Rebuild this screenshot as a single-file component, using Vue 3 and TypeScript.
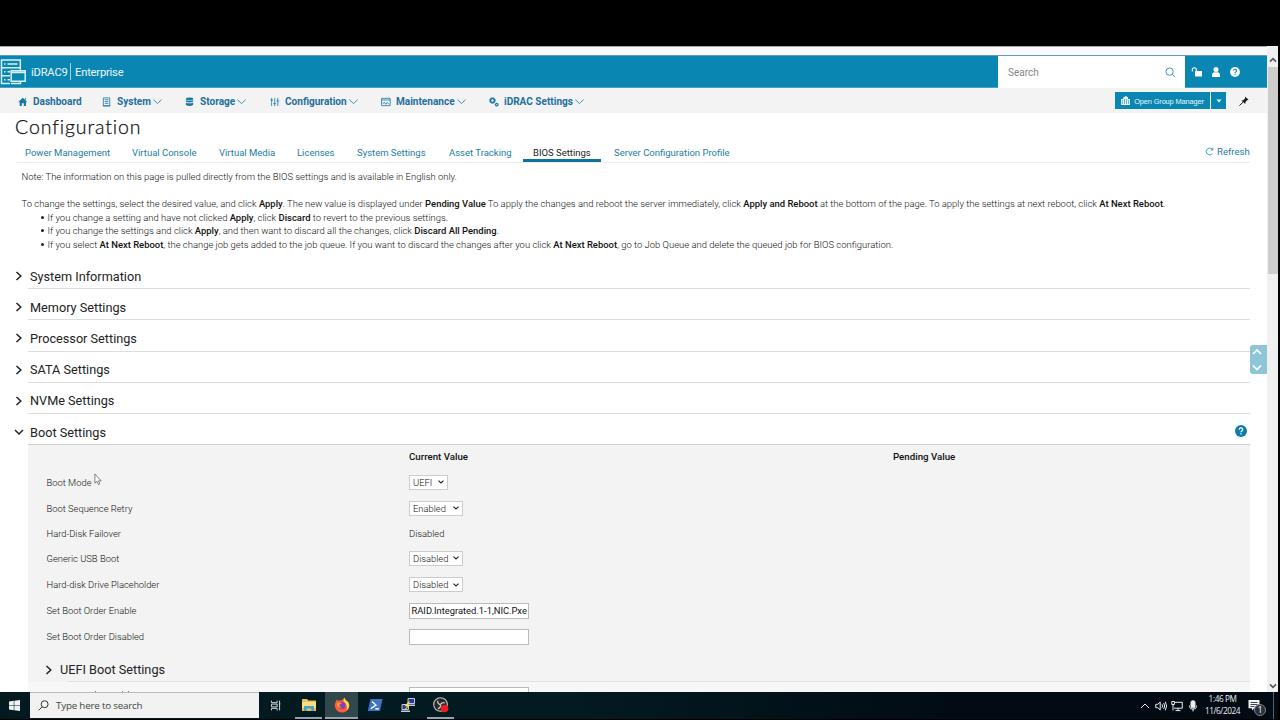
<script setup lang="ts">
import { ref } from "vue";

interface NavItem {
  label: string;
  icon: string;
  menu: boolean;
}

interface Setting {
  label: string;
  kind: "select" | "text" | "input";
  value: string;
  size?: string;
}

const navItems: NavItem[] = [
  { label: "Dashboard", icon: "home", menu: false },
  { label: "System", icon: "system", menu: true },
  { label: "Storage", icon: "storage", menu: true },
  { label: "Configuration", icon: "sliders", menu: true },
  { label: "Maintenance", icon: "monitor", menu: true },
  { label: "iDRAC Settings", icon: "gears", menu: true },
];

const tabs = [
  "Power Management",
  "Virtual Console",
  "Virtual Media",
  "Licenses",
  "System Settings",
  "Asset Tracking",
  "BIOS Settings",
  "Server Configuration Profile",
];
const activeTab = ref("BIOS Settings");

const sections = [
  "System Information",
  "Memory Settings",
  "Processor Settings",
  "SATA Settings",
  "NVMe Settings",
];

const settings: Setting[] = [
  { label: "Boot Mode", kind: "select", value: "UEFI", size: "small" },
  { label: "Boot Sequence Retry", kind: "select", value: "Enabled" },
  { label: "Hard-Disk Failover", kind: "text", value: "Disabled" },
  { label: "Generic USB Boot", kind: "select", value: "Disabled" },
  { label: "Hard-disk Drive Placeholder", kind: "select", value: "Disabled" },
  { label: "Set Boot Order Enable", kind: "input", value: "RAID.Integrated.1-1,NIC.Pxe" },
  { label: "Set Boot Order Disabled", kind: "input", value: "" },
];
</script>

<template>
  <div class="screen">
    <div class="black-bar"></div>
    <div class="browser">
      <main class="page">
        <div class="browser-edge"></div>
        <header class="header">
          <svg class="logo" viewBox="0 0 26 26" fill="none" stroke="#d9f2f7" stroke-width="1.5">
            <path d="M1.5 1h18.8v7.7H1.5zM10 16.8H1.5V8.7h18.8v2M10 24.5H1.5v-7.7" />
            <path d="M11.2 11.7h14v10.5h-14zM11.2 13.6h14M11 24.6h9.5v-2" />
            <path d="M7.5 5h10M7.5 12.8h2.5M7.5 20.7h2.5M4 5h1.5M4 12.8h1.5M4 20.7h1.5" />
          </svg>
          <span class="brand">iDRAC9</span>
          <span class="edition">Enterprise</span>
          <div class="search">
            <span>Search</span>
            <svg viewBox="0 0 12 12" fill="none" stroke="#2b8fb5"><circle cx="5" cy="5" r="4" /><path d="M8 8l3 3" /></svg>
          </div>
          <div class="user-icons">
            <svg viewBox="0 0 12 12" fill="#fff"><path d="M4 5h7v5.5H4z" /><path d="M1.3 5.5V3.7a2 2 0 0 1 4 0V5" fill="none" stroke="#fff" stroke-width="1.1" /></svg>
            <svg viewBox="0 0 12 12" fill="#fff"><circle cx="6" cy="3.5" r="2.5" /><path d="M2 11V8.8Q2 6.2 4.2 6.2h3.6Q10 6.2 10 8.8V11z" /></svg>
            <svg viewBox="0 0 12 12"><circle cx="6" cy="6" r="4.9" fill="#fff" /><path d="M4.6 4.8a1.45 1.45 0 1 1 2.1 1.2Q6 6.3 6 7M6 7.8v1" fill="none" stroke="#0a86b2" stroke-width="1.1" /></svg>
          </div>
        </header>

        <nav class="nav">
          <div class="nav-items">
            <a v-for="item in navItems" :key="item.label" class="nav-item">
              <svg class="nav-icon" viewBox="0 0 11 11" fill="none" stroke="#1c79a5">
                <path v-if="item.icon === 'home'" d="M0.8 5.3L5.2 1l4.5 4.3H8.8V10H6.4V7H4.2v3H1.8V5.3zM8 1v3" fill="#1c79a5" stroke="none" />
                <path v-if="item.icon === 'home'" d="M0.8 5.6L5.2 1.4 9.6 5.6M8.3 1.2v2" />
                <path v-if="item.icon === 'system'" d="M1.5 1h7v9h-7zM3 3h4M3 5h4M3 7h4M1 9.5h8" stroke-width=".9" />
                <g v-if="item.icon === 'storage'" fill="#1c79a5" stroke="none">
                  <ellipse cx="5" cy="2.1" rx="4" ry="1.5" />
                  <path d="M1 3.2q4 2 8 0v1.7q-4 2.4-8 0zM1 6q4 2 8 0v2.8q-4 2.4-8 0z" />
                </g>
                <path v-if="item.icon === 'sliders'" d="M1.8 1v9M5.2 1v9M8.6 1v9M.3 3.3h3M3.7 7.3h3M7.1 4.3h3" stroke-width=".9" />
                <path v-if="item.icon === 'monitor'" d="M.6 1.5h9.5v8H.6zM.6 3.3h9.5M2 7.5l1.5-1.8L5.3 8l1.5-2L8.7 8" stroke-width=".9" />
                <g v-if="item.icon === 'gears'">
                  <circle cx="3.8" cy="3.8" r="2.2" stroke-width="1.8" />
                  <circle cx="3.8" cy="3.8" r="3.2" stroke-width="1" stroke-dasharray="1.2 1.3" />
                  <circle cx="8.5" cy="8.3" r="1.4" stroke-width="1.4" />
                </g>
              </svg>
              <b>{{ item.label }}</b>
              <svg v-if="item.menu" class="caret" viewBox="0 0 9 6" fill="none" stroke="#4291b5"><path d="M.4.6l4.1 4L8.6.6" /></svg>
            </a>
          </div>
          <div class="group-manager">
            <button class="group-open">
              <svg viewBox="0 0 9 9" fill="#e8f6fa"><path d="M0 3h2.2V1.5L5 0l2 1.5V3H9v6H0z" /><path d="M1.3 4v4M3.5 3v5M5.5 3v5M7.6 4v4" stroke="#0a86b2" stroke-width=".6" /></svg>
              <span>Open Group Manager</span>
            </button>
            <button class="group-more"><svg viewBox="0 0 6 4"><path d="M.5.5h5L3 3.4z" fill="#fff" /></svg></button>
          </div>
          <svg class="pin" viewBox="0 0 10 10"><path d="M6 .4l3.6 3.4-1.2.2-1.9 2.1-.3 1.9-3.8-3.6 1.8-.2 2-2z" fill="#1b1b1b" /><path d="M4 6.2L.4 9.6" stroke="#1b1b1b" /></svg>
        </nav>

        <h1>Configuration</h1>
        <div class="tab-bar">
          <a v-for="tab in tabs" :key="tab" class="tab" @click="activeTab = tab">
            <span :class="{ active: tab === activeTab }">{{ tab }}</span>
          </a>
          <a class="refresh">
            <svg viewBox="0 0 10 10" fill="none" stroke="#2489ad" stroke-width=".9"><path d="M8 7.5A3.8 3.8 0 1 1 7.8 2.2L8.5 3M8.7.7v2.6H6.1" /></svg>
            Refresh
          </a>
        </div>

        <div class="notes">
          <p class="note">Note: The information on this page is pulled directly from the BIOS settings and is available in English only.</p>
          <p class="intro">To change the settings, select the desired value, and click <b>Apply</b>. The new value is displayed under <b>Pending Value</b> To apply the changes and reboot the server immediately, click <b>Apply and Reboot</b> at the bottom of the page. To apply the settings at next reboot, click <b>At Next Reboot</b>.</p>
          <ul>
            <li>If you change a setting and have not clicked <b>Apply</b>, click <b>Discard</b> to revert to the previous settings.</li>
            <li>If you change the settings and click <b>Apply</b>, and then want to discard all the changes, click <b>Discard All Pending</b>.</li>
            <li>If you select <b>At Next Reboot</b>, the change job gets added to the job queue. If you want to discard the changes after you click <b>At Next Reboot</b>, go to Job Queue and delete the queued job for BIOS configuration.</li>
          </ul>
        </div>

        <section v-for="name in sections" :key="name" class="section">
          <svg class="chevron" viewBox="0 0 10 10"><path d="M2.5 1L6.8 5l-4.3 4" /></svg>
          <h2>{{ name }}</h2>
        </section>
        <section class="section open">
          <svg class="chevron" viewBox="0 0 10 10"><path d="M1 3l4 4 4-4" /></svg>
          <h2>Boot Settings</h2>
          <svg class="help" viewBox="0 0 12 12"><circle cx="6" cy="6" r="6" fill="#0f7dab" /><path d="M4.3 4.7a1.7 1.7 0 1 1 2.4 1.4Q6 6.5 6 7.3M6 8.2v1.2" fill="none" stroke="#fff" stroke-width="1.3" /></svg>
        </section>

        <div class="boot">
          <div class="row row-head">
            <span></span>
            <b>Current Value</b>
            <b>Pending Value</b>
          </div>
          <div v-for="s in settings" :key="s.label" class="row">
            <span class="label">{{ s.label }}</span>
            <span v-if="s.kind === 'select'" class="select" :class="s.size">
              {{ s.value }}
              <svg viewBox="0 0 6 4" fill="none" stroke="#222" stroke-width="1.1"><path d="M.5.6L3 3 5.5.6" /></svg>
            </span>
            <span v-else-if="s.kind === 'input'" class="input">{{ s.value }}</span>
            <span v-else class="value">{{ s.value }}</span>
          </div>
          <div class="subsection">
            <svg class="chevron" viewBox="0 0 10 10"><path d="M2.5 1L6.8 5l-4.3 4" /></svg>
            <h2>UEFI Boot Settings</h2>
          </div>
          <div class="cut-row">
            <i class="speck"></i><i class="speck"></i><i class="speck"></i>
            <span class="input"></span>
          </div>
        </div>

        <div class="jump">
          <svg viewBox="0 0 17 29" fill="none" stroke="#fff" stroke-width="1.7"><path d="M3 9l4-4 4 4M3 20.5l4 4 4-4" /></svg>
        </div>
        <svg class="cursor" viewBox="0 0 9 14"><path d="M1 .8v10.4l2.4-2.2 1.5 3.6 1.7-.7L5.1 8.5h3z" fill="#fafafa" stroke="#555" stroke-width=".8" /></svg>
      </main>
      <aside class="scrollbar">
        <svg viewBox="0 0 8 6"><path d="M1 4.6l3-3 3 3" /></svg>
        <div class="thumb"></div>
        <svg viewBox="0 0 8 6"><path d="M1 1.4l3 3 3-3" /></svg>
      </aside>
    </div>

    <footer class="taskbar">
      <div class="start">
        <svg viewBox="0 0 12 12" fill="#eef3f4"><path d="M0 1.7l5.2-.8v4.8H0zM5.8.8L12 0v5.7H5.8zM0 6.3h5.2v4.8L0 10.3zM5.8 6.3H12V12l-6.2-.8z" /></svg>
      </div>
      <div class="task-search">
        <svg viewBox="0 0 12 12" fill="none" stroke="#222"><circle cx="7.2" cy="4.6" r="3.8" /><path d="M4.5 7.4L.8 11.2" /></svg>
        <span>Type here to search</span>
      </div>
      <div class="task-apps">
        <div class="app view">
          <svg viewBox="0 0 16 16" fill="none" stroke="#d5dcdc" stroke-width="1.2"><path d="M3 2v2.5h7V2M3 14v-2.5h7V14M3 6.3h7v3.4H3zM13 2v12M12 6h2" /></svg>
        </div>
        <div class="app running">
          <svg viewBox="0 0 16 16"><path d="M1 2h5l1.5 1.5H15V14H1z" fill="#e9bd57" /><path d="M1 5h14v6H1z" fill="#fbdc83" /><path d="M3 9h10v5h-2.7v-2.5H5.7V14H3z" fill="#47a2bd" /></svg>
        </div>
        <div class="app running focused">
          <svg viewBox="0 0 16 16">
            <path d="M8 15.5A7.2 7.2 0 0 1 .9 7.2Q1.3 4 3.2 2.2l.7 1.9Q5.5 3 8 3.5 9 1.5 10.5.5q.1 1.8 1.4 2.7Q15.4 5.5 15.2 9A7.2 7.2 0 0 1 8 15.5z" fill="#ff5b36" />
            <path d="M10.5.5q.1 1.8 1.4 2.7Q15.6 5.5 15.2 9q-.5 3.3-3.2 5 1.5-2.5.8-5Q12 5.8 9.8 4.5 9.3 2.5 10.5.5z" fill="#ffd84a" />
            <circle cx="8" cy="8.6" r="3.5" fill="#7b42c8" />
            <path d="M3 6.2q2-1.6 5 .3-2.2 0-2.5 1.5Q5.4 10 8 10.6q-3.4 1-5-2z" fill="#ff9330" />
          </svg>
        </div>
        <div class="app">
          <svg viewBox="0 0 16 16"><path d="M3.5 2H15.5L13 14H.8z" fill="#3c75c6" /><path d="M5 4.5l4 3.6-5.3 3.7M8.3 11.7h3.5" fill="none" stroke="#fff" stroke-width="1.4" /></svg>
        </div>
        <div class="app">
          <svg viewBox="0 0 16 16"><path d="M8 1.5h6.5v5H8zM2 7.5h6.5v5H2z" fill="#2735a0" stroke="#c7cbd0" /><path d="M7 8.3h8M1 14.3h9" stroke="#c7cbd0" stroke-width="1.6" /><path d="M9.5 4.5L5.6 8.6h3L5.5 12" fill="none" stroke="#f4e53a" stroke-width="1.1" /></svg>
        </div>
        <div class="app running">
          <svg viewBox="0 0 16 16"><circle cx="7.5" cy="7.5" r="6.8" fill="#252729" stroke="#c5c7c8" stroke-width="1.1" /><path d="M7.5 7.5Q4.2 7 4.8 3.6M7.5 7.5Q9 4.8 12 6M7.5 7.5Q8 11 4.8 11.7" fill="none" stroke="#c5c7c8" stroke-width="1.3" /><circle cx="11.6" cy="11.5" r="3.8" fill="#ed1c24" /></svg>
        </div>
      </div>
      <div class="tray">
        <svg viewBox="0 0 12 12"><path d="M2 8l4-4 4 4" /></svg>
        <svg viewBox="0 0 12 12"><path d="M.8 4.3h2L5.2 2v8L2.8 7.7h-2zM7 4.3q1.2 1.7 0 3.4M8.7 3q2 3 0 6M10.3 1.7q2.6 4.3 0 8.6" /></svg>
        <svg viewBox="0 0 12 12"><path d="M3.3 2.3h8v5.9H3M7 8.2v2.4M4.5 10.6h5M.8 1.5h2.6v3H.8zM2 4.5v6" /></svg>
        <svg viewBox="0 0 12 12"><rect x="4" y=".8" width="4" height="7" rx="1.5" fill="#eee" /><path d="M2.5 5.5v1q0 2.7 3.5 2.7t3.5-2.7v-1M6 9v2.4" /></svg>
      </div>
      <div class="clock"><span>1:46 PM</span><span>11/6/2024</span></div>
      <div class="notify">
        <svg viewBox="0 0 12 12"><path d="M.5.5h11v8.3H6.3L4 11V8.8H.5z" fill="#f5f5f5" /><path d="M2.5 3h7M2.5 5h7M2.5 7h4" stroke="#101820" stroke-width=".8" /></svg>
        <span class="badge">1</span>
      </div>
      <div class="desktop-edge"></div>
    </footer>
  </div>
</template>

<style>
body {
  margin: 0;
  background: #000;
}
</style>

<style scoped>
* {
  box-sizing: border-box;
}
.screen {
  width: 1280px;
  height: 720px;
  overflow: hidden;
  display: flex;
  flex-direction: column;
  background: #000;
  font-family: Roboto, "Liberation Sans", sans-serif;
  font-size: 9.6px;
  color: #333;
}
svg {
  display: block;
  flex: none;
}
.black-bar {
  height: 46px;
  flex: none;
}
.browser {
  display: flex;
  height: 646px;
  width: 1278px;
  background: #fff;
}
.page {
  width: 1267px;
  height: 646px;
  overflow: hidden;
  position: relative;
}
.browser-edge {
  height: 9px;
  background: #faf8fa;
  border-top: 1px solid #aaa;
}

/* header */
.header {
  height: 33px;
  display: flex;
  align-items: center;
  background: #0a86b2;
  border-top: 1px solid #5d9fb8;
  border-bottom: 1px solid #4e9fbd;
  color: #eaf7fb;
  font-size: 11.2px;
}
.logo {
  width: 26px;
  height: 26px;
  margin-right: 5px;
}
.brand,
.edition {
  padding-top: 2px;
  letter-spacing: -0.2px;
}
.brand {
  width: 38px;
}
.edition {
  border-left: 1px solid #a5d1e0;
  padding-left: 4px;
  margin-left: 1px;
  line-height: 15px;
}
.search {
  width: 187px;
  height: 32px;
  margin-left: auto;
  padding: 2px 9px 0 10px;
  display: flex;
  align-items: center;
  justify-content: space-between;
  background: #fff;
  color: #858585;
  font-size: 10px;
}
.search svg {
  width: 11px;
  height: 11px;
}
.user-icons {
  width: 82px;
  display: flex;
  gap: 7px;
  padding: 1px 0 0 6px;
}
.user-icons svg {
  width: 12px;
  height: 12px;
}

/* nav */
.nav {
  height: 25px;
  display: flex;
  align-items: center;
  background: #f3f3f3;
  padding-left: 18px;
}
.nav-items {
  padding-top: 2px;
  display: grid;
  grid-template-columns: 84px 83px 85px 111px 108px 110px;
}
.nav-item {
  display: flex;
  align-items: center;
  color: #1c6f9d;
  font-size: 10.05px;
  white-space: nowrap;
}
.nav-icon {
  width: 10px;
  height: 10px;
  margin-right: 5px;
}
.caret {
  width: 9px;
  height: 6px;
  margin-left: 2px;
}
.group-manager {
  display: flex;
  gap: 1px;
  margin-left: auto;
}
.group-manager button {
  height: 17px;
  padding: 0;
  border: 0;
  display: flex;
  align-items: center;
  justify-content: center;
  background: #0a86b2;
  color: #eaf7fb;
  font: 7.4px "Liberation Sans", sans-serif;
  letter-spacing: -0.12px;
}
.group-open {
  width: 95px;
  gap: 4px;
}
.group-open svg {
  width: 9px;
  height: 9px;
}
.group-open span {
  padding-top: 2px;
}
.group-more {
  width: 15px;
}
.group-more svg {
  width: 6px;
  height: 4px;
  margin-top: 1px;
}
.pin {
  width: 10px;
  height: 10px;
  margin: 0 18px 0 13px;
}

/* heading and tabs */
h1 {
  margin: 0;
  height: 31px;
  padding: 1px 0 0 15px;
  font: 300 19.5px/26px Lato, sans-serif;
  letter-spacing: 0.9px;
  color: #111;
  -webkit-text-stroke: 0.25px #111;
}
.tab-bar {
  height: 19px;
  margin: 0 17px 0 16px;
  padding-left: 9px;
  display: grid;
  grid-template-columns: 107px 87px 78px 60px 92px 84px 81px 1fr 45px;
  border-bottom: 1px solid #ececec;
  color: #237da0;
  white-space: nowrap;
  font-size: 9.5px;
}
.tab {
  line-height: 18px;
}
.tab span {
  display: inline-block;
}
.tab .active {
  margin-left: -10px;
  padding: 0 10px;
  height: 18px;
  line-height: 17px;
  border-bottom: 3px solid #0f719c;
  color: #222;
}
.refresh {
  display: flex;
  align-items: center;
  gap: 3px;
  height: 15px;
  font-size: 9.6px;
}
.refresh svg {
  width: 9px;
  height: 9px;
}

/* notes */
.notes {
  height: 95px;
  padding: 7px 0 0 21.5px;
  line-height: 13.7px;
  white-space: nowrap;
  font-size: 9.45px;
  font-weight: 300;
  color: #111;
}
.notes p,
.notes ul {
  margin: 0;
}
.notes b {
  font-weight: 500;
}
.note {
  height: 27px;
}
.notes ul {
  padding-left: 19.5px;
  list-style: none;
}
.notes li {
  display: block;
}
.notes li::before {
  content: "";
  display: inline-block;
  width: 3px;
  height: 3px;
  margin: 0 4px 2px -0.5px;
  border-radius: 50%;
  background: #222;
}

/* collapsible sections */
.section {
  height: 31.2px;
  margin: 0 17px 0 28px;
  padding-top: 6px;
  border-bottom: 1px solid #dedede;
  display: flex;
  align-items: center;
}
.section h2,
.subsection h2 {
  margin: 0;
  font-size: 12.7px;
  font-weight: 400;
  color: #222;
}
.section .chevron {
  margin-left: -14px;
  margin-right: 6px;
}
.chevron {
  width: 10px;
  height: 10px;
  fill: none;
  stroke: #222;
  stroke-width: 1.5;
}
.section.open {
  border-color: #d0d0d0;
}
.help {
  width: 12px;
  height: 12px;
  margin: 0 3px 2px auto;
}

/* boot settings */
.boot {
  margin: 0 17px 0 28px;
  height: 250px;
  background: #f3f3f3;
  display: grid;
  grid-template-rows: 24px 26px 26.5px 23.5px 26.5px 26px 26px 26px 32.5px 12px;
}
.row {
  display: grid;
  grid-template-columns: 362.5px 484px 1fr;
  align-items: center;
  padding-left: 18.5px;
  color: #111;
  font-weight: 300;
  font-size: 9.4px;
}
.row-head {
  padding-bottom: 1px;
  font-size: 9.7px;
}
.row-head b {
  font-weight: 500;
}
.select {
  width: 54px;
  height: 15px;
  padding: 0 3px;
  border: 1px solid #ccc;
  background: #fff;
  display: flex;
  align-items: center;
  justify-content: space-between;
}
.select.small {
  width: 39px;
}
.select svg {
  width: 6px;
  height: 4px;
}
.input {
  width: 120px;
  height: 16px;
  padding: 0 0 0 1.5px;
  border: 1px solid #bbb;
  background: #fff;
  background-clip: padding-box;
  color: #111;
  font-weight: 400;
  font-size: 9.35px;
  line-height: 14px;
  overflow: hidden;
  white-space: nowrap;
}
.subsection {
  display: flex;
  align-items: center;
  padding: 8px 0 0 16px;
  background: linear-gradient(#e2e2e2, #e2e2e2) 40px 100% / 100% 1px no-repeat;
}
.subsection .chevron {
  margin-right: 6px;
}
.cut-row {
  background: #f7f7f7;
  padding: 5px 0 0 67px;
  display: flex;
  align-items: flex-start;
}
.cut-row .input {
  margin-left: auto;
  margin-right: 721px;
}
.speck {
  width: 1px;
  height: 1px;
  margin: 4px 0 0;
  background: #777;
}
.speck:nth-child(2) {
  margin-left: 26px;
}
.speck:nth-child(3) {
  margin-left: 5px;
}

/* floating controls */
.jump {
  position: absolute;
  right: 0;
  top: 299px;
  width: 17px;
  height: 29px;
  border-radius: 3px 0 0 3px;
  background: #8fc6d7;
}
.cursor {
  position: absolute;
  left: 94px;
  top: 427px;
  width: 8px;
  height: 13px;
}

/* scrollbar */
.scrollbar {
  width: 11px;
  padding: 11px 0 3px;
  background: #f0f0f0;
  display: flex;
  flex-direction: column;
  align-items: center;
}
.scrollbar svg {
  width: 8px;
  height: 6px;
  fill: none;
  stroke: #555;
  stroke-width: 1.5;
}
.thumb {
  width: 10px;
  height: 207px;
  margin: 4px 0 auto;
  background: #cdcdcd;
}

/* taskbar */
.taskbar {
  height: 27px;
  width: 1278px;
  background: linear-gradient(90deg, #021a20, #031a20 45%, #020b14 75%);
  display: flex;
  align-items: stretch;
  font-family: "Open Sans", sans-serif;
}
.start {
  width: 30px;
  display: grid;
  place-items: center;
  padding-right: 2px;
}
.start svg {
  width: 11px;
  height: 11px;
}
.task-search {
  width: 229px;
  height: 26px;
  padding-left: 8px;
  display: flex;
  align-items: center;
  gap: 7px;
  background: #f2f2f2;
  border-top: 1px solid #bbb;
  color: #444;
  font-size: 9.8px;
  letter-spacing: -0.2px;
}
.task-search svg {
  width: 11px;
  height: 11px;
}
.task-apps {
  display: flex;
}
.app {
  width: 33px;
  padding-bottom: 1px;
  display: grid;
  place-items: center;
  border-left: 3px solid transparent;
  border-right: 3px solid transparent;
}
.app svg {
  width: 16px;
  height: 16px;
}
.view svg {
  width: 13px;
  height: 13px;
}
.running {
  background: linear-gradient(#8da5b5, #8da5b5) bottom / 100% 2px no-repeat;
  background-clip: padding-box;
}
.focused {
  border: 0;
  background: linear-gradient(#8da5b5, #8da5b5) bottom / 100% 2px no-repeat #32474c;
}
.tray {
  margin-left: auto;
  display: flex;
  align-items: center;
  gap: 4px;
}
.tray svg {
  width: 12px;
  height: 12px;
  fill: none;
  stroke: #eee;
  stroke-width: 1;
}
.clock {
  width: 46px;
  padding: 0 0 2px 1px;
  display: flex;
  flex-direction: column;
  align-items: center;
  justify-content: center;
  color: #eee;
  font-size: 8.2px;
  line-height: 12px;
  letter-spacing: -0.4px;
}
.notify {
  width: 28px;
  padding: 7px 0 0 3px;
  position: relative;
}
.notify svg {
  width: 12px;
  height: 13px;
}
.badge {
  position: absolute;
  left: 9px;
  top: 12px;
  width: 12px;
  height: 12px;
  border: 1px solid #7c8288;
  border-radius: 50%;
  background: #28313a;
  color: #fff;
  font-size: 9px;
  line-height: 10px;
  text-align: center;
}
.desktop-edge {
  width: 5px;
  border-left: 1px solid #59616a;
}
</style>
